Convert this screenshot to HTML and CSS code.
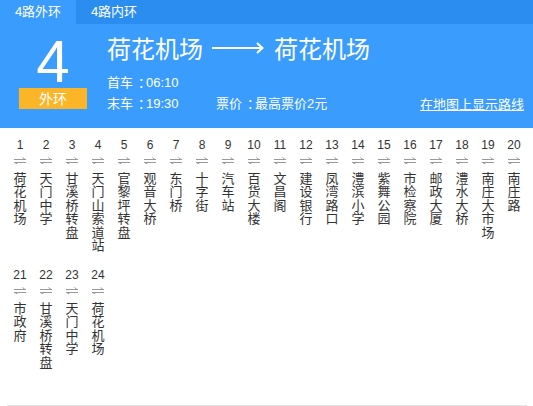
FILE: index.html
```html
<!DOCTYPE html>
<html lang="zh">
<head>
<meta charset="utf-8">
<link rel="stylesheet" href="styles.css">
</head>
<body>
<div class="tabs">
  <div class="tab active">4路外环</div>
  <div class="tab">4路内环</div>
</div>
<div class="header">
  <div class="badge-col">
    <div class="bignum">4</div>
    <div class="badge">外环</div>
  </div>
  <div class="info">
    <div class="title">
      <span>荷花机场</span>
      <svg class="long-arrow" width="52" height="14" viewBox="0 0 52 14"><path d="M0 7H50" stroke="#fff" stroke-width="2"/><path d="M45 2L50.5 7L45 12" fill="none" stroke="#fff" stroke-width="2"/></svg>
      <span>荷花机场</span>
    </div>
    <div class="line">首车<span class="colon">：</span>06:10</div>
    <div class="line last">
      <span class="time">末车<span class="colon">：</span>19:30</span>
      <span class="price">票价<span class="colon">：</span>最高票价2元</span>
      <a class="maplink" href="#">在地图上显示路线</a>
    </div>
  </div>
</div>
<div class="stops" id="stops"></div>
<div class="bottom-line"></div>
<script src="app.js"></script>
</body>
</html>
```
FILE: app.js
```js
var names = ["荷花机场","天门中学","甘溪桥转盘","天门山索道站","官黎坪转盘","观音大桥","东门桥","十字街","汽车站","百货大楼","文昌阁","建设银行","凤湾路口","澧滨小学","紫舞公园","市检察院","邮政大厦","澧水大桥","南庄大市场","南庄路","市政府","甘溪桥转盘","天门中学","荷花机场"];
var icon = '<svg class="swap" width="12" height="7" viewBox="0 0 12 7"><path d="M0 2.5H12M8.5 0.5L11 2.5M0 5.5H12M0.5 5.5L3.5 7" stroke="#999" stroke-width="1" fill="none"/></svg>';
var html = "";
for (var i = 0; i < names.length; i++) {
  html += '<div class="stop"><div class="num">' + (i + 1) + '</div>' + icon + '<div class="name">' + names[i] + '</div></div>';
}
document.getElementById("stops").innerHTML = html;
```
FILE: styles.css
```css
html, body { margin: 0; padding: 0; background: #fff; }
body { width: 533px; height: 406px; overflow: hidden; font-family: "Noto Sans CJK SC", "Liberation Sans", sans-serif; }
.tabs { display: flex; height: 24px; background: #2b8df0; }
.tab { width: 76px; line-height: 24px; text-align: center; color: #fff; font-size: 13px; font-family: "Liberation Sans", "Noto Sans CJK SC", sans-serif; }
.tab.active { background: #3a9cfc; }
.header { display: flex; height: 104px; background: #3a9cfc; color: #fff; box-sizing: border-box; padding: 12px 0 0 19px; }
.badge-col { width: 68px; display: flex; flex-direction: column; align-items: center; }
.bignum { font-family: "Liberation Sans", sans-serif; font-size: 60px; line-height: 52px; height: 52px; }
.badge { width: 68px; height: 21px; background: #fcb526; text-align: center; font-size: 14px; line-height: 21px; }
.info { flex: 1; margin-left: 20px; padding-right: 9px; font-size: 13px; }
.title { display: flex; align-items: center; font-size: 24px; line-height: 30px; height: 30px; margin-top: -3px; }
.long-arrow { margin: 0 10px 0 9px; }
.line { line-height: 20px; height: 20px; margin-top: 10px; font-family: "Liberation Sans", "Noto Sans CJK SC", sans-serif; }
.colon { padding-left: 5px; letter-spacing: -5px; }
.line.last { margin-top: 1px; display: flex; }
.time { width: 109px; }
.price { flex: 1; }
.maplink { color: #fff; text-decoration: underline; font-family: "Noto Sans CJK SC", sans-serif; }
.stops { display: grid; grid-template-columns: repeat(20, 26px); grid-auto-rows: 130px; padding: 9px 0 0 7px; height: 277px; box-sizing: border-box; }
.stop { display: flex; flex-direction: column; align-items: center; }
.num { font-family: "Liberation Sans", sans-serif; font-size: 12px; line-height: 16px; color: #333; }
.swap { display: block; margin-top: 4px; }
.name { width: 13px; margin-top: 7px; font-size: 13px; line-height: 13.4px; color: #333; word-break: break-all; text-align: center; }
.bottom-line { margin: 0 6px 0 7px; height: 1px; background: #e6e6e6; }
```
